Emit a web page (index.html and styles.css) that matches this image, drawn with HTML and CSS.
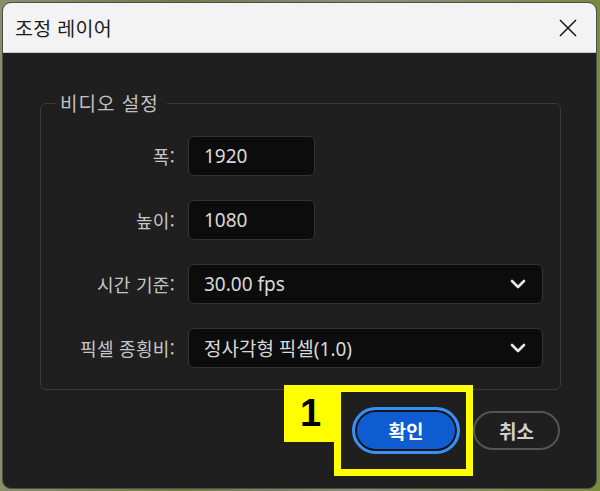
FILE: index.html
```html
<!DOCTYPE html>
<html lang="ko">
<head>
<meta charset="utf-8">
<title>조정 레이어</title>
<link rel="stylesheet" href="styles.css">
</head>
<body>
<div class="window">
  <div class="titlebar">
    <span class="title">조정 레이어</span>
    <svg class="close" width="20" height="20" viewBox="0 0 20 20"><path d="M2 2 L18 18 M18 2 L2 18" stroke="#1a1a1a" stroke-width="1.6" fill="none"/></svg>
  </div>
  <div class="content">
    <fieldset class="group">
      <legend class="legend">비디오 설정</legend>
      <div class="grid">
        <label class="lbl">폭:</label>
        <div class="field small">1920</div>
        <label class="lbl">높이:</label>
        <div class="field small">1080</div>
        <label class="lbl">시간 기준:</label>
        <div class="field wide"><span>30.00 fps</span><svg class="chev" width="16" height="10" viewBox="0 0 16 10"><path d="M2 2 L8 8 L14 2" stroke="#e6e6e6" stroke-width="2.6" fill="none" stroke-linecap="round" stroke-linejoin="round"/></svg></div>
        <label class="lbl">픽셀 종횡비:</label>
        <div class="field wide"><span>정사각형 픽셀(1.0)</span><svg class="chev" width="16" height="10" viewBox="0 0 16 10"><path d="M2 2 L8 8 L14 2" stroke="#e6e6e6" stroke-width="2.6" fill="none" stroke-linecap="round" stroke-linejoin="round"/></svg></div>
      </div>
    </fieldset>
    <div class="actions">
      <button class="btn primary">확인</button>
      <button class="btn secondary">취소</button>
    </div>
  </div>
</div>
<div class="callout-box"></div>
<div class="callout-num">1</div>
</body>
</html>
```
FILE: styles.css
```css
html, body {
  margin: 0;
  padding: 0;
}
body {
  width: 600px;
  height: 491px;
  overflow: hidden;
  background: linear-gradient(90deg, #8a8f6a 0%, #6f7a45 30%, #8b8c7c 60%, #7c8a3c 100%);
  font-family: "Noto Sans CJK KR", "Noto Sans", sans-serif;
  position: relative;
}
.window {
  margin: 2px 3px 0 2px;
  height: 485px;
  border: 1px solid #4d4d4d;
  border-radius: 9px;
  background: #1f1f1f;
  overflow: hidden;
  display: flex;
  flex-direction: column;
}
.titlebar {
  height: 49px;
  flex: none;
  background: #f3f3f3;
  border-bottom: 1px solid #c9c9c9;
  display: flex;
  align-items: center;
  justify-content: space-between;
  padding: 0 18px 0 12px;
}
.title {
  font-size: 19.5px;
  color: #1b1b1b;
  letter-spacing: 0.3px;
}
.close {
  display: block;
}
.content {
  padding: 38px 35px 0 37px;
  display: flex;
  flex-direction: column;
}
.group {
  margin: 0;
  border: 1px solid #3a3a3a;
  border-radius: 6px;
  padding: 21px 16px 21px 0;
}
.legend {
  margin-left: 15px;
  padding: 0 8px 0 4px;
  font-size: 19px;
  line-height: 24px;
  color: #c2c2c2;
  letter-spacing: 1px;
}
.grid {
  display: grid;
  grid-template-columns: 134px auto;
  column-gap: 13px;
  row-gap: 24px;
  align-items: center;
}
.lbl {
  text-align: right;
  font-size: 18px;
  color: #c6c6c6;
  letter-spacing: 0.3px;
}
.field {
  height: 38px;
  border: 1px solid #343434;
  border-radius: 6px;
  background: #0c0c0c;
  box-sizing: content-box;
  display: flex;
  align-items: center;
  justify-content: space-between;
  padding: 0 16px 0 15px;
  font-family: "Noto Sans", "Noto Sans CJK KR", sans-serif;
  font-size: 19px;
  color: #d9d9d9;
}
.field.small {
  width: 94px;
}
.field.wide {
  width: 322px;
}
.field span {
  font-family: "Noto Sans", "Noto Sans CJK KR", sans-serif;
}
.chev {
  display: block;
}
.actions {
  display: flex;
  justify-content: flex-end;
  align-items: center;
  gap: 13px;
  margin-top: 17px;
  margin-right: 1px;
}
.btn {
  font-family: "Noto Sans CJK KR", sans-serif;
  font-weight: bold;
  font-size: 19px;
  border-radius: 24px;
  cursor: pointer;
  padding: 0;
}
.btn.primary {
  width: 108px;
  height: 47px;
  background: #0f5bd0;
  color: #ffffff;
  border: 3px solid #3a8ff5;
  box-shadow: inset 0 0 0 2px #151515;
}
.btn.secondary {
  width: 87px;
  height: 39px;
  background: transparent;
  color: #d0d0d0;
  border: 2px solid #555555;
}
.callout-box {
  position: absolute;
  left: 334px;
  top: 385px;
  width: 125px;
  height: 77px;
  border: 7px solid #ffff00;
}
.callout-num {
  position: absolute;
  left: 284px;
  top: 385px;
  width: 57px;
  height: 57px;
  background: #ffff00;
  color: #000;
  font-family: "Liberation Sans", sans-serif;
  font-weight: bold;
  font-size: 38px;
  line-height: 57px;
  text-align: center;
  padding-right: 4px;
  box-sizing: border-box;
}
```
